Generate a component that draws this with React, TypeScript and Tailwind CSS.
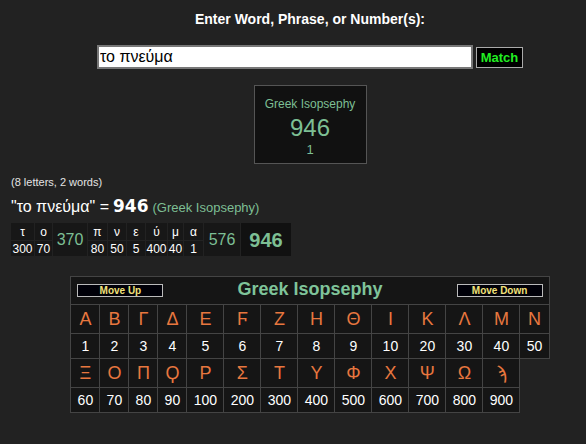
const row1 = [
  ["Α", "1"], ["Β", "2"], ["Γ", "3"], ["Δ", "4"], ["Ε", "5"], ["Ϝ", "6"], ["Ζ", "7"],
  ["Η", "8"], ["Θ", "9"], ["Ι", "10"], ["Κ", "20"], ["Λ", "30"], ["Μ", "40"], ["Ν", "50"],
];

const row2 = [
  ["Ξ", "60"], ["Ο", "70"], ["Π", "80"], ["Ϙ", "90"], ["Ρ", "100"], ["Σ", "200"], ["Τ", "300"],
  ["Υ", "400"], ["Φ", "500"], ["Χ", "600"], ["Ψ", "700"], ["Ω", "800"], ["ϡ", "900"],
];

const colWidths = [29, 29, 29, 29, 37, 37, 37, 37, 37, 37, 37, 37, 37, 29];

function LetterCol({ l, n, w }: { l: string; n: string; w: string }) {
  return (
    <div className={`flex flex-col gap-px ${w}`}>
      <div className="h-[17px] bg-[#171717] flex items-center justify-center text-[12px] text-white">{l}</div>
      <div className="h-[15px] bg-[#171717] flex items-center justify-center text-[12px] text-white">{n}</div>
    </div>
  );
}

function Breakdown() {
  return (
    <div className="flex gap-px bg-[#222] w-fit ml-[11px] mt-[5px]">
      <LetterCol l="τ" n="300" w="w-[23px]" />
      <LetterCol l="ο" n="70" w="w-[17px]" />
      <div className="w-[34px] bg-[#171717] flex items-center justify-center text-[16px] text-[#7dbf94]">370</div>
      <LetterCol l="π" n="80" w="w-[19px]" />
      <LetterCol l="ν" n="50" w="w-[18px]" />
      <LetterCol l="ε" n="5" w="w-[18px]" />
      <LetterCol l="ύ" n="400" w="w-[21px]" />
      <LetterCol l="μ" n="40" w="w-[15px]" />
      <LetterCol l="α" n="1" w="w-[19px]" />
      <div className="w-[36px] bg-[#171717] flex items-center justify-center text-[16px] text-[#7dbf94]">576</div>
      <div className="w-[50px] bg-[#111] flex items-center justify-center text-[20px] font-bold text-[#7dbf94]">946</div>
    </div>
  );
}

function MoveButton({ label }: { label: string }) {
  return (
    <button className="w-[86px] h-[13px] bg-[#000008] border border-[#bbb] text-[10px] leading-none font-bold text-[#f2e27a]">
      {label}
    </button>
  );
}

export default function App() {
  return (
    <div className="min-h-[444px] bg-[#222] text-white font-['Liberation_Sans',Arial,sans-serif] pt-[9px]">
      <div className="pl-[34px] flex justify-center">
        <h1 className="text-[14px] font-bold">Enter Word, Phrase, or Number(s):</h1>
      </div>
      <div className="pl-[34px] flex justify-center items-center gap-[3px] mt-[15px]">
        <input
          defaultValue="το πνεύμα"
          className="w-[376px] h-[24px] bg-white text-black border-2 border-[#777] px-[1px] text-[16px] outline-none font-['Liberation_Sans',sans-serif]"
        />
        <button className="w-[47px] h-[21px] bg-black border border-[#aaa] text-[13px] font-bold text-[#22ee22] leading-none">
          Match
        </button>
      </div>
      <div className="pl-[34px] flex justify-center mt-[16px]">
        <div className="w-[113px] h-[79px] bg-[#111] border border-[#555] flex flex-col items-center pt-[11px] text-[#7dbf94]">
          <div className="text-[12px] leading-[14px]">Greek Isopsephy</div>
          <div className="text-[24px] leading-[26px] mt-[4px]">946</div>
          <div className="text-[13px] leading-[14px] mt-[2px]">1</div>
        </div>
      </div>
      <div className="ml-[11px] mt-[12px] text-[11px] text-[#e4e4e4] leading-[13px]">(8 letters, 2 words)</div>
      <div className="ml-[11px] mt-[7px] flex items-baseline gap-[4px] leading-[20px]">
        <span className="text-[16px]">"το πνεύμα" =</span>
        <span className="text-[17px] font-bold font-['DejaVu_Sans',sans-serif]">946</span>
        <span className="text-[13px] text-[#7dbf94]">(Greek Isopsephy)</span>
      </div>
      <Breakdown />
      <div className="pl-[34px] flex justify-center mt-[20px]">
        <table className="border-collapse table-fixed w-[478px]">
          <colgroup>
            {colWidths.map((w, i) => (
              <col key={i} style={{ width: w }} />
            ))}
          </colgroup>
          <tbody>
            <tr className="h-[28px]">
              <td colSpan={14} className="border border-[#444] bg-[#151515] px-[6px]">
                <div className="flex items-center justify-between">
                  <MoveButton label="Move Up" />
                  <span className="text-[18px] font-bold text-[#7fc49a] -mt-[2px]">Greek Isopsephy</span>
                  <MoveButton label="Move Down" />
                </div>
              </td>
            </tr>
            <tr className="h-[29px]">
              {row1.map(([l]) => (
                <td key={l} className="border border-[#444] bg-[#151515] text-center text-[18px] text-[#e8773f]">{l}</td>
              ))}
            </tr>
            <tr className="h-[25px]">
              {row1.map(([l, n]) => (
                <td key={l} className="border border-[#444] bg-[#151515] text-center text-[14px] text-white">{n}</td>
              ))}
            </tr>
            <tr className="h-[29px]">
              {row2.map(([l]) => (
                <td key={l} className="border border-[#444] bg-[#151515] text-center text-[18px] text-[#e8773f]">{l}</td>
              ))}
            </tr>
            <tr className="h-[25px]">
              {row2.map(([l, n]) => (
                <td key={l} className="border border-[#444] bg-[#151515] text-center text-[14px] text-white">{n}</td>
              ))}
            </tr>
          </tbody>
        </table>
      </div>
    </div>
  );
}
